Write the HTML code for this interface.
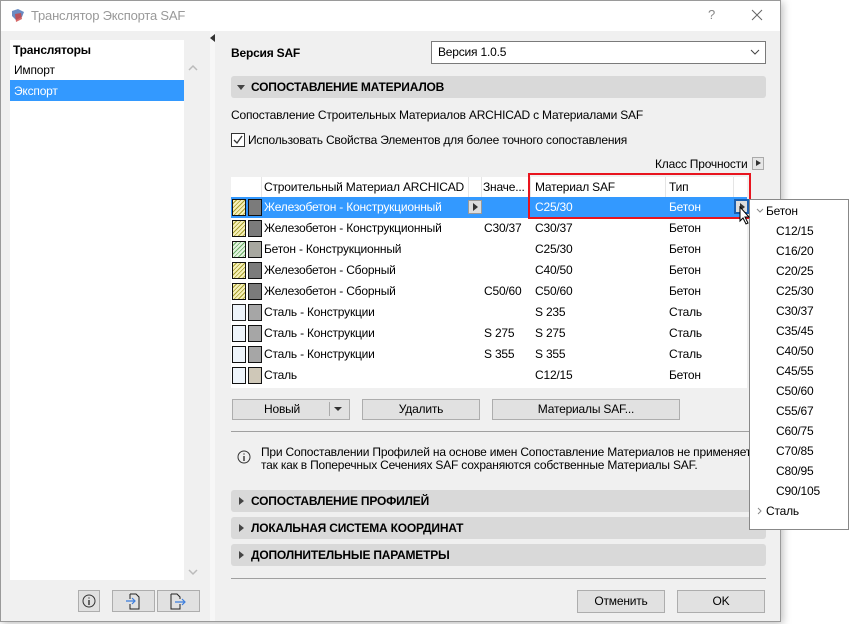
<!DOCTYPE html>
<html><head><meta charset="utf-8"><style>
*{box-sizing:border-box;margin:0;padding:0}
body{width:849px;height:624px;background:#fff;font-family:"Liberation Sans",sans-serif;font-size:12px;letter-spacing:-0.2px;color:#000;position:relative;overflow:hidden}
.a{position:absolute;white-space:nowrap}
.win{position:absolute;left:0;top:0;width:781px;height:622px;background:#f0f0f0;box-shadow:2px 2px 8px rgba(0,0,0,.25)}
.btn{position:absolute;background:#e1e1e1;border:1px solid #adadad;text-align:center;line-height:19px}
.sec{position:absolute;left:231px;width:535px;height:22px;background:#d9d9d9;border-radius:3px;font-weight:bold;line-height:22px;padding-left:20px}
.sec:before{content:"";position:absolute;left:8px;top:7px;border-left:5px solid #444;border-top:4px solid transparent;border-bottom:4px solid transparent}
.sec.open:before{left:6px;top:9px;border-top:5px solid #444;border-left:4px solid transparent;border-right:4px solid transparent;border-bottom:0}
.row{position:absolute;left:231px;width:516px;height:21px;line-height:21px}
.sw1{position:absolute;left:1px;top:2px;width:14px;height:17px;border:1.5px solid #111}
.sw2{position:absolute;left:17px;top:2px;width:14px;height:17px;border:1.5px solid #111}
.c{position:absolute;top:0}
.pi{position:absolute;left:776px;height:20px;line-height:20px}
</style></head><body>
<div class="win">
<div class="a" style="left:0;top:0;width:781px;height:31px;background:#fff"></div>
<svg class="a" style="left:10px;top:8px" width="16" height="16"><path d="M2 3 L8 1 L14 4 L12 9 L6 12 L2 8Z" fill="#6a8cc4"/><path d="M5 6 L11 5 L12 11 L6 14Z" fill="#c44" opacity=".8"/></svg>
<div class="a" style="left:31px;top:8px;font-size:13px;color:#999">Транслятор Экспорта SAF</div>
<div class="a" style="left:708px;top:7px;font-size:13px;color:#888">?</div>
<svg class="a" style="left:751px;top:9px" width="12" height="12"><path d="M1 1L11 11M11 1L1 11" stroke="#666" stroke-width="1"/></svg>

<div class="a" style="left:10px;top:40px;width:174px;height:540px;background:#fff"></div>
<div class="a" style="left:13px;top:43px;font-weight:bold">Трансляторы</div>
<div class="a" style="left:14px;top:63px">Импорт</div>
<div class="a" style="left:10px;top:80px;width:174px;height:21px;background:#3399ff"></div>
<div class="a" style="left:14px;top:84px;color:#fff">Экспорт</div>
<svg class="a" style="left:188px;top:64px" width="10" height="8"><path d="M1 6L5 2L9 6" stroke="#bbb" fill="none" stroke-width="1.5"/></svg>
<svg class="a" style="left:188px;top:568px" width="10" height="8"><path d="M1 2L5 6L9 2" stroke="#bbb" fill="none" stroke-width="1.5"/></svg>
<div class="a" style="left:210px;top:31px;width:5px;height:590px;background:#f7f7f7"></div>
<div class="a" style="left:210px;top:34px;border-right:5px solid #333;border-top:4px solid transparent;border-bottom:4px solid transparent"></div>

<div class="btn" style="left:78px;top:590px;width:22px;height:22px"></div>
<svg class="a" style="left:82px;top:594px" width="14" height="14"><circle cx="7" cy="7" r="6" fill="none" stroke="#333"/><path d="M7 6V11M7 3.5V4.5" stroke="#333" stroke-width="1.4"/></svg>
<div class="btn" style="left:112px;top:590px;width:43px;height:22px"></div>
<svg class="a" style="left:124px;top:592px" width="18" height="18"><path d="M6 2H12L15 5V17H6V12M6 7V2" stroke="#222" fill="none"/><path d="M2 9H11M8 6L11 9L8 12" stroke="#3b7ddd" fill="none" stroke-width="1.2"/></svg>
<div class="btn" style="left:157px;top:590px;width:43px;height:22px"></div>
<svg class="a" style="left:168px;top:592px" width="20" height="18"><path d="M3 2H9L12 5V7M12 12V17H3V2" stroke="#222" fill="none"/><path d="M7 10H17M14 7L17 10L14 13" stroke="#3b7ddd" fill="none" stroke-width="1.2"/></svg>

<div class="a" style="left:231px;top:46px;font-weight:bold">Версия SAF</div>
<div class="a" style="left:431px;top:41px;width:335px;height:23px;background:#fff;border:1px solid #7a7a7a;line-height:21px;padding-left:6px">Версия 1.0.5</div>
<svg class="a" style="left:750px;top:49px" width="10" height="7"><path d="M1 1L5 5L9 1" stroke="#444" fill="none"/></svg>

<div class="sec open" style="top:76px">СОПОСТАВЛЕНИЕ МАТЕРИАЛОВ</div>
<div class="a" style="left:231px;top:108px">Сопоставление Строительных Материалов ARCHICAD с Материалами SAF</div>
<div class="a" style="left:231px;top:133px;width:14px;height:14px;border:1px solid #333;background:#fff"></div>
<svg class="a" style="left:232px;top:134px" width="12" height="12"><path d="M2 6L5 9L10 2" stroke="#333" fill="none" stroke-width="1.3"/></svg>
<div class="a" style="left:248px;top:133px">Использовать Свойства Элементов для более точного сопоставления</div>
<div class="a" style="left:655px;top:157px">Класс Прочности</div>
<div class="a" style="left:752px;top:157px;width:12px;height:13px;border:1px solid #aaa;background:#e6e6e6"></div>
<div class="a" style="left:756px;top:160px;border-left:5px solid #333;border-top:3.5px solid transparent;border-bottom:3.5px solid transparent"></div>

<div class="a" style="left:231px;top:177px;width:516px;height:211px;background:#fff"></div>
<div class="row" style="top:177px;height:20px;line-height:20px">
<div class="a" style="left:30px;top:0;width:1px;height:20px;background:#e5e5e5"></div>
<div class="c" style="left:33px">Строительный Материал ARCHICAD</div>
<div class="a" style="left:237px;top:0;width:1px;height:20px;background:#e5e5e5"></div>
<div class="a" style="left:250px;top:0;width:1px;height:20px;background:#e5e5e5"></div>
<div class="c" style="left:252px">Значе...</div>
<div class="a" style="left:299px;top:0;width:1px;height:20px;background:#e5e5e5"></div>
<div class="c" style="left:304px">Материал SAF</div>
<div class="a" style="left:434px;top:0;width:1px;height:20px;background:#e5e5e5"></div>
<div class="c" style="left:438px">Тип</div>
<div class="a" style="left:502px;top:0;width:1px;height:20px;background:#e5e5e5"></div>
</div>
<div class="row" style="top:197px;background:#3399ff;color:#fff">
<div class="sw1" style="background:repeating-linear-gradient(135deg,#f6f0b8 0 2px,#a8a030 2px 3px)"></div><div class="sw2" style="background:#7b7b7b"></div>
<div class="c" style="left:33px">Железобетон - Конструкционный</div>
<div class="a" style="left:237px;top:3px;width:14px;height:14px;background:#ddd;border:1px solid #999"></div>
<div class="a" style="left:242px;top:6px;border-left:5px solid #333;border-top:4px solid transparent;border-bottom:4px solid transparent"></div>
<div class="c" style="left:304px">C25/30</div><div class="c" style="left:438px">Бетон</div>
<div class="a" style="left:503px;top:2px;width:15px;height:15px;background:#ddd;border:2px solid #1a5fb0"></div>
<div class="a" style="left:509px;top:6px;border-left:5px solid #333;border-top:4px solid transparent;border-bottom:4px solid transparent"></div>
</div>
<div class="row" style="top:218px"><div class="sw1" style="background:repeating-linear-gradient(135deg,#f6f0b8 0 2px,#a8a030 2px 3px)"></div><div class="sw2" style="background:#7b7b7b"></div><div class="c" style="left:33px">Железобетон - Конструкционный</div><div class="c" style="left:253px">C30/37</div><div class="c" style="left:304px">C30/37</div><div class="c" style="left:438px">Бетон</div></div>
<div class="row" style="top:239px"><div class="sw1" style="background:repeating-linear-gradient(135deg,#e4f4e0 0 2px,#6cb068 2px 3px)"></div><div class="sw2" style="background:#a8a8a0"></div><div class="c" style="left:33px">Бетон - Конструкционный</div><div class="c" style="left:304px">C25/30</div><div class="c" style="left:438px">Бетон</div></div>
<div class="row" style="top:260px"><div class="sw1" style="background:repeating-linear-gradient(135deg,#f6f0b8 0 2px,#a8a030 2px 3px)"></div><div class="sw2" style="background:#7b7b7b"></div><div class="c" style="left:33px">Железобетон - Сборный</div><div class="c" style="left:304px">C40/50</div><div class="c" style="left:438px">Бетон</div></div>
<div class="row" style="top:281px"><div class="sw1" style="background:repeating-linear-gradient(135deg,#f6f0b8 0 2px,#a8a030 2px 3px)"></div><div class="sw2" style="background:#7b7b7b"></div><div class="c" style="left:33px">Железобетон - Сборный</div><div class="c" style="left:253px">C50/60</div><div class="c" style="left:304px">C50/60</div><div class="c" style="left:438px">Бетон</div></div>
<div class="row" style="top:302px"><div class="sw1" style="background:#eef4fa;border-color:#222"></div><div class="sw2" style="background:#a6a6a6"></div><div class="c" style="left:33px">Сталь - Конструкции</div><div class="c" style="left:304px">S 235</div><div class="c" style="left:438px">Сталь</div></div>
<div class="row" style="top:323px"><div class="sw1" style="background:#eef4fa"></div><div class="sw2" style="background:#a6a6a6"></div><div class="c" style="left:33px">Сталь - Конструкции</div><div class="c" style="left:253px">S 275</div><div class="c" style="left:304px">S 275</div><div class="c" style="left:438px">Сталь</div></div>
<div class="row" style="top:344px"><div class="sw1" style="background:#eef4fa"></div><div class="sw2" style="background:#a6a6a6"></div><div class="c" style="left:33px">Сталь - Конструкции</div><div class="c" style="left:253px">S 355</div><div class="c" style="left:304px">S 355</div><div class="c" style="left:438px">Сталь</div></div>
<div class="row" style="top:365px"><div class="sw1" style="background:#eef4fa"></div><div class="sw2" style="background:#cfc8b8"></div><div class="c" style="left:33px">Сталь</div><div class="c" style="left:304px">C12/15</div><div class="c" style="left:438px">Бетон</div></div>
<div class="a" style="left:528px;top:173px;width:223px;height:46px;border:2px solid #e8141e"></div>

<div class="btn" style="left:232px;top:399px;width:118px;height:21px;text-align:left;padding-left:31px">Новый</div>
<div class="a" style="left:329px;top:402px;width:1px;height:14px;background:#aaa"></div>
<div class="a" style="left:334px;top:407px;border-top:4px solid #333;border-left:4px solid transparent;border-right:4px solid transparent"></div>
<div class="btn" style="left:362px;top:399px;width:118px;height:21px">Удалить</div>
<div class="btn" style="left:492px;top:399px;width:188px;height:21px">Материалы SAF...</div>
<div class="a" style="left:231px;top:431px;width:535px;height:1px;background:#a0a0a0"></div>
<svg class="a" style="left:237px;top:450px" width="14" height="14"><circle cx="7" cy="7" r="6" fill="none" stroke="#333"/><path d="M7 6V11M7 3.5V4.5" stroke="#333" stroke-width="1.4"/></svg>
<div class="a" style="left:261px;top:445px">При Сопоставлении Профилей на основе имен Сопоставление Материалов не применяет</div>
<div class="a" style="left:261px;top:458px">так как в Поперечных Сечениях SAF сохраняются собственные Материалы SAF.</div>

<div class="sec" style="top:490px">СОПОСТАВЛЕНИЕ ПРОФИЛЕЙ</div>
<div class="sec" style="top:517px">ЛОКАЛЬНАЯ СИСТЕМА КООРДИНАТ</div>
<div class="sec" style="top:544px">ДОПОЛНИТЕЛЬНЫЕ ПАРАМЕТРЫ</div>
<div class="a" style="left:231px;top:578px;width:535px;height:1px;background:#a0a0a0"></div>
<div class="btn" style="left:577px;top:590px;width:88px;height:23px;line-height:21px">Отменить</div>
<div class="btn" style="left:677px;top:590px;width:88px;height:23px;line-height:21px">OK</div>
<div class="a" style="left:0;top:0;width:781px;height:622px;border:1px solid #9a9a9a;pointer-events:none"></div>
</div>

<div class="a" style="left:749px;top:199px;width:100px;height:331px;background:#fff;border:1px solid #888"></div>
<svg class="a" style="left:756px;top:208px" width="8" height="6"><path d="M1 1L4 4L7 1" stroke="#888" fill="none"/></svg>
<div class="pi" style="left:766px;top:201px">Бетон</div>
<div class="pi" style="top:221px">C12/15</div>
<div class="pi" style="top:241px">C16/20</div>
<div class="pi" style="top:261px">C20/25</div>
<div class="pi" style="top:281px">C25/30</div>
<div class="pi" style="top:301px">C30/37</div>
<div class="pi" style="top:321px">C35/45</div>
<div class="pi" style="top:341px">C40/50</div>
<div class="pi" style="top:361px">C45/55</div>
<div class="pi" style="top:381px">C50/60</div>
<div class="pi" style="top:401px">C55/67</div>
<div class="pi" style="top:421px">C60/75</div>
<div class="pi" style="top:441px">C70/85</div>
<div class="pi" style="top:461px">C80/95</div>
<div class="pi" style="top:481px">C90/105</div>
<svg class="a" style="left:757px;top:507px" width="6" height="8"><path d="M1 1L4 4L1 7" stroke="#888" fill="none"/></svg>
<div class="pi" style="left:766px;top:501px">Сталь</div>
<svg class="a" style="left:739px;top:206px" width="12" height="20"><path d="M1 1V15L4 12L7 18L9 17L6 11H10Z" fill="#fff" stroke="#000" stroke-width="1"/></svg>
</body></html>
